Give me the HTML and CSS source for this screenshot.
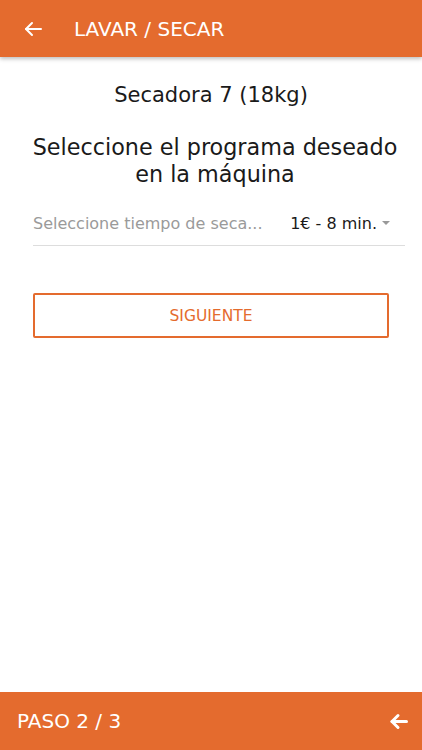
FILE: index.html
```html
<!DOCTYPE html>
<html>
<head>
  <title>Lavar / Secar</title>
  <link rel="stylesheet" href="styles.css">
</head>
<body>
  <header class="topbar">
    <span class="back-btn">
      <svg width="18" height="16" viewBox="0 0 18 16"><g stroke="#FFF" stroke-width="2" fill="none" stroke-linecap="round" stroke-linejoin="round"><path d="M17 8H2"/><path d="M8 2L2 8l6 6"/></g></svg>
    </span>
    <span class="topbar-title">LAVAR / SECAR</span>
  </header>

  <main class="content">
    <h2 class="machine">Secadora 7 (18kg)</h2>
    <p class="prompt">Seleccione el programa deseado<br>en la máquina</p>

    <div class="picker">
      <span class="picker-label">Seleccione tiempo de seca...</span>
      <span class="picker-value">1€ - 8 min.</span>
      <span class="picker-caret"></span>
    </div>

    <button class="next-btn">SIGUIENTE</button>
  </main>

  <footer class="bottombar">
    <span class="step">PASO 2 / 3</span>
    <span class="step-back">
      <svg width="19" height="17" viewBox="0 0 19 17"><g stroke="#FFF" stroke-width="3" fill="none" stroke-linecap="round" stroke-linejoin="round"><path d="M17.5 8.5H3"/><path d="M9 2.5l-6 6 6 6"/></g></svg>
    </span>
  </footer>
</body>
</html>
```

FILE: styles.css
```css
html, body {margin: 0; height: 100%;}
body {
  font-family: "DejaVu Sans", sans-serif;
  color: #1A1A1A;
  display: flex;
  flex-direction: column;
  background: #FFF;
}

.topbar {
  height: 57px;
  background: #E46B2E;
  color: #FFF;
  display: flex;
  align-items: center;
  box-shadow: 0 2px 4px rgba(0,0,0,0.25);
  position: relative;
  z-index: 1;
}
.back-btn {
  width: 18px;
  height: 16px;
  margin-left: 24px;
  display: flex;
}
.topbar-title {
  margin-left: 32px;
  font-size: 20px;
}

.content {
  flex: 1;
  padding: 0 17px 0 33px;
}
.machine {
  margin: 25px 16px 0 0;
  font-size: 21px;
  line-height: 27px;
  font-weight: normal;
  text-align: center;
}
.prompt {
  margin: 25px 0 0 -8px;
  font-size: 22.3px;
  line-height: 27px;
  text-align: center;
  white-space: nowrap;
}

.picker {
  margin-top: 13px;
  height: 44px;
  border-bottom: 1px solid #DDD;
  display: flex;
  align-items: center;
  font-size: 16px;
}
.picker-label {
  color: #9A9A9A;
  flex: 1;
}
.picker-value {
  color: #1A1A1A;
  margin-right: 5px;
}
.picker-caret {
  width: 0;
  height: 0;
  border-left: 4px solid transparent;
  border-right: 4px solid transparent;
  border-top: 4px solid #999;
  margin-right: 15px;
}

.next-btn {
  display: block;
  margin-top: 47px;
  width: 356px;
  height: 45px;
  border: 2px solid #E46B2E;
  border-radius: 2px;
  background: #FFF;
  color: #E46B2E;
  font: 15.5px "DejaVu Sans", sans-serif;
}

.bottombar {
  height: 58px;
  background: #E46B2E;
  color: #FFF;
  display: flex;
  align-items: center;
  padding: 0 14px 0 17px;
}
.step {
  flex: 1;
  font-size: 20px;
}
.step-back {display: flex;}
```
